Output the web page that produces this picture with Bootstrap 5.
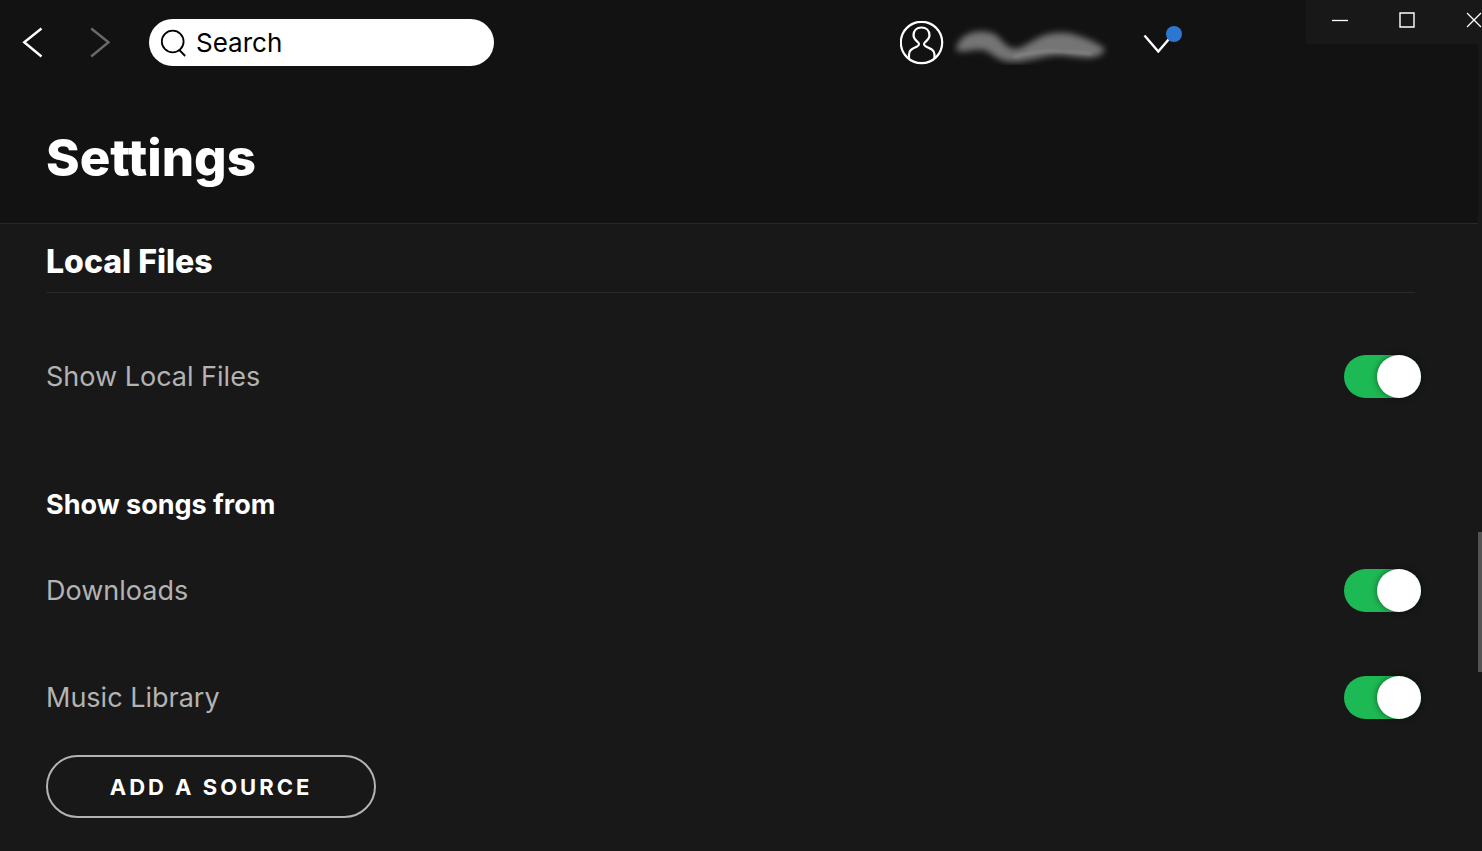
<!DOCTYPE html>
<html lang="en">
<head>
<meta charset="utf-8">
<meta name="viewport" content="width=device-width, initial-scale=1">
<title>Settings</title>
<link href="https://cdn.jsdelivr.net/npm/bootstrap@5.3.0/dist/css/bootstrap.min.css" rel="stylesheet">
<style>
  body { background: #181818; color: #fff; font-family: Inter, "Liberation Sans", sans-serif; }
  svg { display: block; fill: none; }
  .app-header { background: #121212; border-bottom: 1px solid #282828; margin-right: 4px; }
  .top-bar { height: 85px; padding-left: 20px; }
  .icon-btn { background: none; border: 0; padding: 0; color: #fff; }
  .icon-btn:disabled { color: #6a6a6a; }
  .history { gap: 41px; }
  .search-box { width: 345px; height: 47px; margin-left: 36px; padding-left: 11px; gap: 8px; background: #fff; color: #000; border-radius: 24px; }
  .search-box input { min-width: 0; border: 0; outline: 0; background: none; padding: 0; font-size: 26px; line-height: 36px; color: #000; }
  .search-box input::placeholder { color: #000; opacity: 1; }
  .account { margin-right: 133px; }
  .user-name { margin-left: 8px; margin-right: 31px; }
  .notice-dot { width: 16px; height: 16px; background: #2e77d0; top: -7px; right: -9px; }
  .window-controls { width: 172px; height: 44px; background: #181818; margin-right: -4px; box-sizing: content-box; padding-right: 4px; }
  .window-controls svg { width: 16px; height: 16px; }
  .window-controls .icon-btn { flex: 0 0 67px; height: 40px; }
  .page-title { font-size: 51px; line-height: 64px; font-weight: 800; padding: 41px 46px 33px 46px; }
  .settings { padding: 0 61px 33px 46px; }
  .section-title { font-size: 32px; line-height: 48px; font-weight: 800; padding: 14px 0 6px; margin: 0 6px 30px 0; border-bottom: 1px solid #282828; }
  .group-title { font-size: 27px; line-height: 40px; font-weight: 700; margin: 55px 0 12px; }
  .setting-row { height: 107px; font-size: 27px; line-height: 36px; color: #b3b3b3; }
  .form-check-input.toggle { width: 77px; height: 43px; margin: 0; float: none; border: 0; border-radius: 22px; background: #535353; position: relative; cursor: pointer; }
  .form-check-input.toggle::before { content: ""; position: absolute; left: 0; top: 0; width: 44px; height: 43px; border-radius: 50%; background: #fff; box-shadow: 0 0 6px rgba(0,0,0,.5); }
  .form-check-input.toggle:checked { background: #1db954; }
  .form-check-input.toggle:checked::before { left: 33px; }
  .add-source { width: 330px; height: 63px; margin-top: 4px; border: 2px solid #b3b3b3; border-radius: 32px; color: #fff; font-size: 22px; line-height: 32px; font-weight: 700; letter-spacing: 3px; }
  .scroll-thumb { right: 0; top: 62.5%; width: 4px; height: 140px; background: #535353; }
</style>
</head>
<body class="min-vh-100 overflow-hidden">
<header class="app-header">
  <div class="top-bar d-flex align-items-center">
    <div class="history d-flex">
      <button class="icon-btn" type="button" aria-label="Back"><svg width="26" height="32" viewBox="0 0 26 32" stroke="currentColor" stroke-width="2.4"><path d="M21.500 1.500 4.200 15.200 21.500 29.500"/></svg></button>
      <button class="icon-btn" type="button" aria-label="Forward" disabled><svg width="26" height="32" viewBox="0 0 26 32" stroke="currentColor" stroke-width="2.4"><path d="M4.200 1.500 21.500 15.200 4.200 29.500"/></svg></button>
    </div>
    <label class="search-box d-flex align-items-center">
      <svg class="flex-shrink-0" width="28" height="30" viewBox="0 0 28 30" stroke="currentColor" stroke-width="1.800"><circle cx="12.700" cy="13.500" r="10.900"/><path d="M19.300 22 25.200 28"/></svg>
      <input class="flex-grow-1" type="text" placeholder="Search" aria-label="Search">
    </label>
    <div class="account ms-auto d-flex align-items-center">
      <svg width="44" height="44" viewBox="0 0 44 44" stroke="#fff" stroke-width="2.200"><circle cx="21.500" cy="21.500" r="20.700"/><path d="M9 37.500V33.500C9 29.500 11.500 28 17 25.500Q20.500 23.500 17.800 21C15 18.500 13.500 17.500 13.500 14.500C13.500 9.500 17 6.500 21.500 6.500S29.500 9.500 29.500 14.500C29.500 17.500 28 18.500 25.200 21Q22.500 23.500 26 25.500C31.500 28 34.500 29.500 34.500 33.500V37.500"/></svg>
      <svg class="user-name" width="160" height="44" viewBox="0 0 160 44" aria-hidden="true">
        <defs><filter id="soft" x="-20%" y="-50%" width="140%" height="200%"><feGaussianBlur stdDeviation="3"/></filter><filter id="fine" x="-20%" y="-50%" width="140%" height="200%"><feGaussianBlur stdDeviation="1.500"/></filter></defs>
        <path d="M4 29C8 8 34 8 44 14C53 22 56 30 68 27C85 18 92 10 116 12C133 16 146 22 153 28C148 41 128 36 109 34C87 34 73 44 53 40C38 35 38 29 29 29C20 28 11 33 4 29Z" fill="#747474" filter="url(#soft)"/>
        <path d="M62 36C85 29 100 29 140 33" stroke="#aaa" stroke-width="2" opacity=".5" filter="url(#fine)"/>
      </svg>
      <button class="icon-btn position-relative" type="button" aria-label="Account menu"><svg width="30" height="20" viewBox="0 0 30 20" stroke="currentColor" stroke-width="2.400"><path d="M1.500 2.500 15.300 18.500 29 2.500"/></svg><span class="notice-dot position-absolute rounded-circle"></span></button>
    </div>
    <div class="window-controls d-flex align-self-start overflow-hidden">
      <button class="icon-btn d-flex align-items-center justify-content-center" type="button" aria-label="Minimize"><svg viewBox="0 0 16 16" stroke="#fff" stroke-width="1.300"><path d="M0 8.500H16"/></svg></button>
      <button class="icon-btn d-flex align-items-center justify-content-center" type="button" aria-label="Maximize"><svg viewBox="0 0 16 16" stroke="#fff" stroke-width="1.400"><path d="M1 1H15V15H1Z"/></svg></button>
      <button class="icon-btn d-flex align-items-center justify-content-center" type="button" aria-label="Close"><svg viewBox="0 0 16 16" stroke="#fff" stroke-width="1.300"><path d="M1 1 15 15M15 1 1 15"/></svg></button>
    </div>
  </div>
  <h1 class="page-title mb-0">Settings</h1>
</header>
<main class="settings">
  <h2 class="section-title">Local Files</h2>
  <div class="setting-row d-flex align-items-center justify-content-between"><label for="localFiles">Show Local Files</label><input class="form-check-input toggle" type="checkbox" role="switch" id="localFiles" checked></div>
  <h3 class="group-title">Show songs from</h3>
  <div class="setting-row d-flex align-items-center justify-content-between"><label for="downloads">Downloads</label><input class="form-check-input toggle" type="checkbox" role="switch" id="downloads" checked></div>
  <div class="setting-row d-flex align-items-center justify-content-between"><label for="musicLibrary">Music Library</label><input class="form-check-input toggle" type="checkbox" role="switch" id="musicLibrary" checked></div>
  <button class="add-source btn p-0" type="button">ADD A SOURCE</button>
</main>
<div class="scroll-thumb position-fixed"></div>
<script src="https://cdn.jsdelivr.net/npm/bootstrap@5.3.0/dist/js/bootstrap.bundle.min.js"></script>
</body>
</html>
